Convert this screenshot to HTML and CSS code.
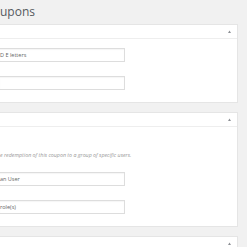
FILE: index.html
```html
<!DOCTYPE html>
<html>
<head>
<meta charset="utf-8">
<link rel="stylesheet" href="styles.css">
</head>
<body>
<div class="wrap">
  <h1 class="title">upons</h1>
  <div class="panel">
    <div class="panel-head">
      <svg class="toggle" width="3" height="3" viewBox="0 0 3 3"><path d="M0 3 L1.5 0.5 L3 3 Z" fill="#8c8f94"/></svg>
    </div>
    <div class="panel-body p1">
      <div class="field">D E letters</div>
      <div class="field"></div>
    </div>
  </div>
  <div class="panel">
    <div class="panel-head">
      <svg class="toggle" width="3" height="3" viewBox="0 0 3 3"><path d="M0 3 L1.5 0.5 L3 3 Z" fill="#8c8f94"/></svg>
    </div>
    <div class="panel-body p2">
      <p class="desc">e redemption of this coupon to a group of specific users.</p>
      <div class="field">an User</div>
      <div class="field">role(s)</div>
    </div>
  </div>
  <div class="panel">
    <div class="panel-head">
      <svg class="toggle" width="3" height="3" viewBox="0 0 3 3"><path d="M0 3 L1.5 0.5 L3 3 Z" fill="#8c8f94"/></svg>
    </div>
  </div>
</div>
</body>
</html>
```
FILE: styles.css
```css
html, body {
  margin: 0;
  padding: 0;
  background: #f1f1f1;
}
body {
  font-family: "Open Sans", "Liberation Sans", sans-serif;
  color: #32373c;
  overflow: hidden;
}
.wrap {
  width: 238px;
}
.title {
  margin: 0;
  padding: 4px 0 0 0;
  height: 20px;
  font-size: 12px;
  font-weight: 400;
  line-height: 16px;
  color: #55595e;
}
.panel {
  background: #fff;
  border: 1px solid #e5e5e5;
  border-left: none;
  margin-bottom: 9px;
}
.panel-head {
  height: 13px;
  border-bottom: 1px solid #eee;
  display: flex;
  justify-content: flex-end;
  align-items: center;
  padding-right: 6px;
}
.toggle {
  display: block;
}
.panel-body {
  display: flex;
  flex-direction: column;
}
.p1 {
  padding: 9px 0 12px 0;
  gap: 14px;
}
.p2 {
  padding: 0 0 12px 0;
  gap: 14px;
}
.field {
  width: 124px;
  height: 12px;
  border: 1px solid #ddd;
  border-left: none;
  box-sizing: content-box;
  font-size: 5.5px;
  line-height: 12px;
  color: #666;
  box-shadow: inset 0 1px 1px rgba(0,0,0,0.04);
}
.desc {
  margin: 24px 0 -1px 0;
  font-size: 5.3px;
  line-height: 8px;
  font-style: italic;
  color: #999;
}
```
